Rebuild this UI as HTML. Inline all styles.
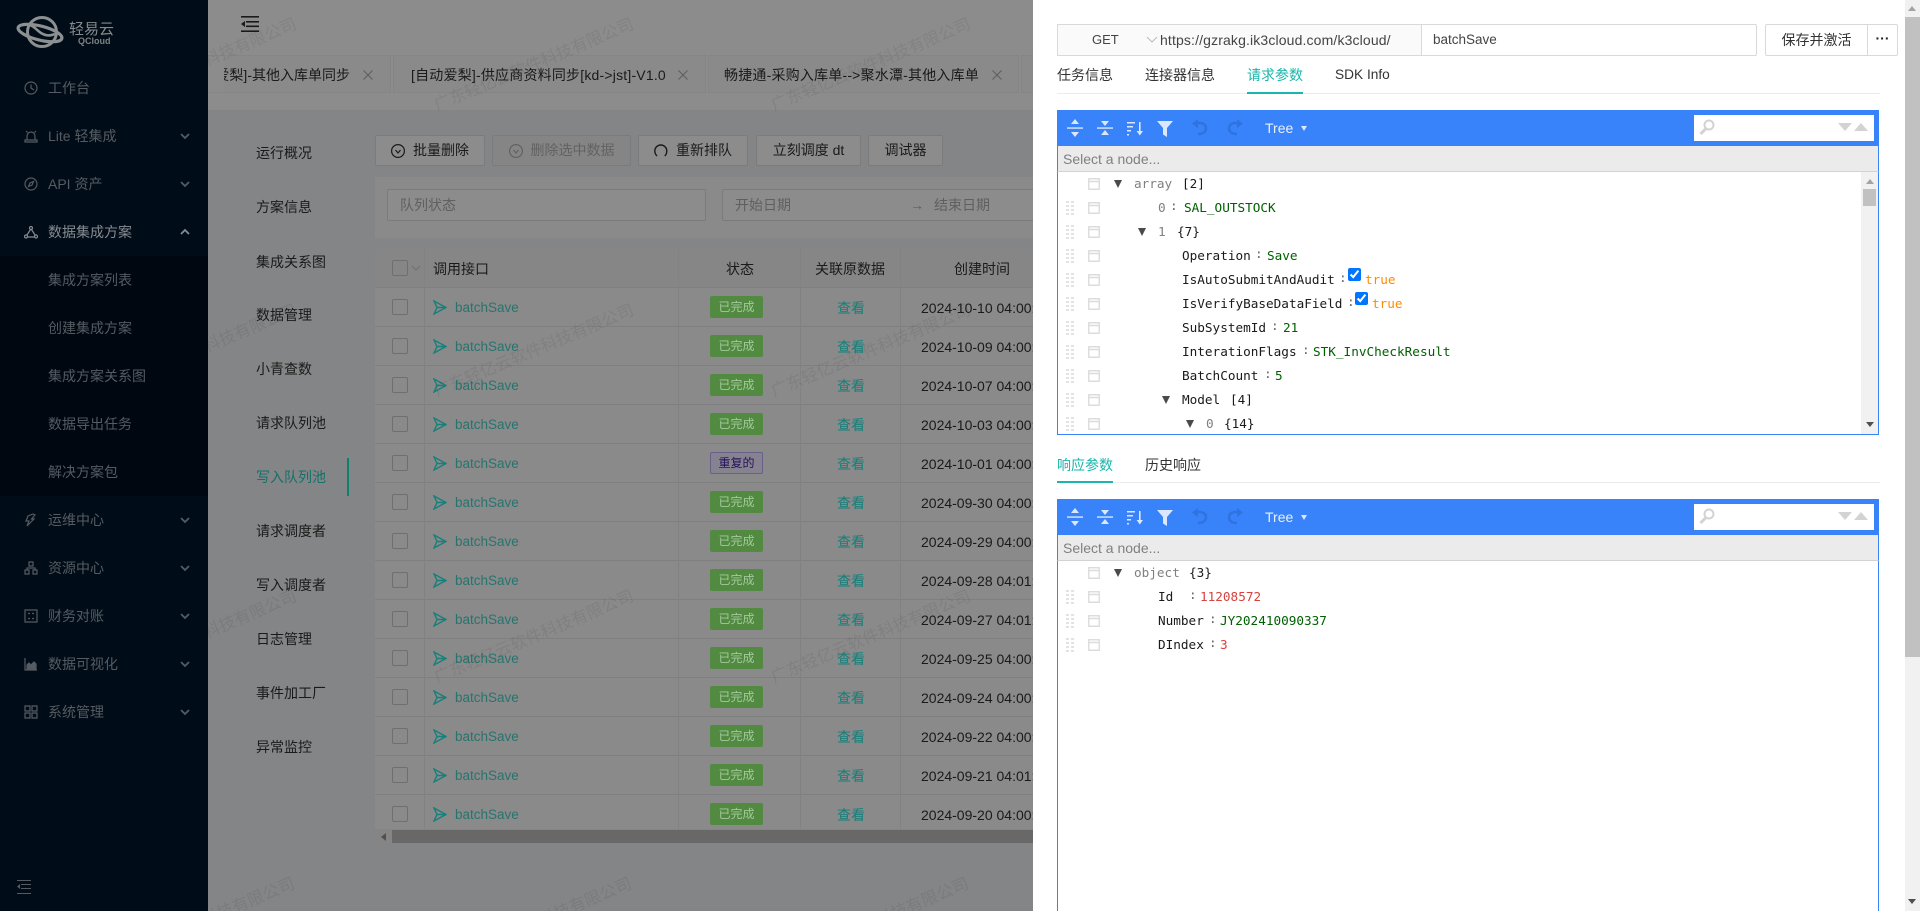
<!DOCTYPE html>
<html lang="zh"><head><meta charset="utf-8"><title>轻易云</title>
<style>
html,body{margin:0;padding:0;width:1920px;height:911px;overflow:hidden;background:#848586}
*{box-sizing:border-box}
body{font:14px/22px "Liberation Sans","Noto Sans CJK SC",sans-serif;color:#1a1a1a}
#root{position:absolute;left:0;top:0;width:1920px;height:911px;overflow:hidden;background:#848586}
/* sidebar */
#side{position:absolute;left:0;top:0;width:208px;height:911px;background:#000c18;overflow:hidden}
#side .sub{position:absolute;left:0;top:256px;width:208px;height:240px;background:#000710}
.m{position:absolute;left:48px;color:#555b61;height:24px;line-height:24px;white-space:nowrap}
.ic{position:absolute;left:24px;width:14px;height:14px;fill:none;stroke:#555b61;stroke-width:1.2}
.ch{position:absolute;left:180px;width:10px;height:6px;fill:none;stroke:#555b61;stroke-width:1.8}
/* top */
#top{position:absolute;left:208px;top:0;width:825px;height:110px;background:#8c8c8c}
.tab{position:absolute;top:55px;height:38px;line-height:38px;background:#8a8a8a;border:1px solid #858585;white-space:nowrap;overflow:hidden;letter-spacing:.2px}
.x{position:absolute;top:14px;width:10px;height:10px;fill:none;stroke:#5d5d5d;stroke-width:1}
/* inner menu */
.l{position:absolute;left:256px;height:22px;white-space:nowrap}
/* buttons */
.b{position:absolute;top:135px;height:31px;line-height:29px;border:1px solid #7b7b7b;background:#8c8c8c;text-align:center;white-space:nowrap;border-radius:2px}
.b svg{vertical-align:-3px;margin-right:8px}
/* table */
#card{position:absolute;left:375px;top:177px;width:658px;height:61px;background:#8a8a8a}
.inp{position:absolute;top:189px;height:32px;border:1px solid #7b7b7b;background:#8c8c8c;color:#5f5f5f;line-height:30px;padding-left:12px;border-radius:2px;white-space:nowrap}
#tb{position:absolute;left:375px;top:249px;width:658px;height:580px;overflow:hidden;background:#8a8a8a}
.hd{position:absolute;left:0;top:0;width:658px;height:39px;background:#868686;border-bottom:1px solid #7f7f7f}
.hd span{position:absolute;top:9px;white-space:nowrap}
.cl{position:absolute;top:0;width:1px;height:580px;background:#828282}
.row{position:absolute;left:0;width:658px;height:39px;border-bottom:1px solid #7f7f7f}
.row>*{position:absolute}
.cb{left:17px;top:11px;width:16px;height:16px;border:1px solid #6f6f6f;background:#8a8a8a;border-radius:2px}
.sd{left:58px;top:12px;width:14px;height:15px;fill:none;stroke:#17807a;stroke-width:1.4}
.bs{left:80px;top:9px;color:#27746e;font-size:13.5px}
.tg{left:335px;top:8px;width:53px;height:22px;line-height:22px;font-size:12px;text-align:center;background:#528a42;color:#a3c99a;border-radius:2px}
.tg.p{background:#86828f;color:#26125f;border:1px solid #66608a;line-height:20px}
.vw{left:462px;top:9px;width:28px;color:#12807a}
.dt{left:546px;top:9px;white-space:nowrap}
/* watermark */
.wm{position:absolute;width:230px;text-align:center;font-size:16.5px;line-height:20px;color:rgba(0,0,0,.07);transform:translate(-50%,-50%) rotate(-22.7deg);white-space:nowrap}
/* drawer */
#dr{position:absolute;left:1033px;top:0;width:887px;height:911px;background:#fff;color:#333}
.d{position:absolute;white-space:nowrap}
.tb{position:absolute;white-space:nowrap;color:#333}
.tb.on{color:#1ab5ab}
.menu{position:absolute;left:1057px;width:822px;height:36px;background:#3883fa}
.nav{position:absolute;left:1057px;width:822px;height:26px;background:#ebebeb;border-left:1px solid #3883fa;border-right:1px solid #3883fa;border-bottom:1px solid #d3d3d3;color:#808080;font-size:14px;line-height:26px;padding-left:5px}
.tree{position:absolute;left:1057px;width:822px;border:1px solid #3883fa;border-top:0;background:#fff}
.r{position:absolute;left:0;height:24px;width:1px}
.r>*{position:absolute;top:0;white-space:pre;font:12.7px/24px "DejaVu Sans Mono","Liberation Mono",monospace}
.k{color:#1a1a1a}.g{color:#808080}.s{color:#006000}.n{color:#d8423c}.o{color:#ff8c00}.c{color:#666;top:-2px!important}
.tri{width:0;height:0;top:8px!important;border-left:4.5px solid transparent;border-right:4.5px solid transparent;border-top:8px solid #4a4a4a}
svg{overflow:visible}
</style></head><body>
<svg width="0" height="0" style="position:absolute">
<symbol id="dg" viewBox="0 0 8 14"><g fill="#e2e2e2"><rect width="3" height="2"/><rect x="5" width="3" height="2"/><rect y="4" width="3" height="2"/><rect x="5" y="4" width="3" height="2"/><rect y="8" width="3" height="2"/><rect x="5" y="8" width="3" height="2"/><rect y="12" width="3" height="2"/><rect x="5" y="12" width="3" height="2"/></g></symbol>
<symbol id="cm" viewBox="0 0 12 12"><path d="M.75.75h10.5v10.5H.75zM.75 3.500h10.500" fill="none" stroke="#dcdcdc" stroke-width="1.4"/></symbol>
<symbol id="pl" viewBox="0 0 14 15"><path d="M1 1l12 6.500L1 14l3-6.500zM4 7.500h9"/></symbol>
<symbol id="tool" viewBox="0 0 106 24">
<g fill="#dbe7fd"><path d="M0 11.400h16v1.300H0zM8 3l4 5H4zM8 21l-4-5h8z"/><path d="M30 11.400h16v1.300H30zM38 10l-4-5h8zM38 14l4 5h-8z"/><path d="M60 6h8v1.500h-8zM60 10h6v1.500h-6zM60 14h4v1.500h-4zM60 18h2v1.500h-2zM72 6h1.600v9H76l-3.200 4.500L69.600 15H72z"/><path d="M90 5h16l-6 7v9l-4-2.500V12z"/></g>
</symbol>
<symbol id="undo" viewBox="0 0 18 18"><path d="M6 15c5 0 8-2 8-6 0-3-3-5-6-5H5" fill="none" stroke="#2f73e0" stroke-width="2.600"/><path d="M6 0L0 4.500 6 9z" fill="#2f73e0"/></symbol>
<symbol id="redo" viewBox="0 0 18 18"><path d="M12 15c-5 0-8-2-8-6 0-3 3-5 6-5h3" fill="none" stroke="#2f73e0" stroke-width="2.600"/><path d="M12 0l6 4.500L12 9z" fill="#2f73e0"/></symbol>
<symbol id="mag" viewBox="0 0 16 16"><circle cx="10" cy="6" r="4.500" fill="none" stroke="#d3d3d3" stroke-width="2"/><path d="M7 9.500L1.500 15" stroke="#d3d3d3" stroke-width="3"/></symbol>
<symbol id="xx" viewBox="0 0 10 10"><path d="M.5.500l9 9M9.500.500l-9 9"/></symbol>
</svg>
<div id="root">

<!-- main background pieces -->
<div id="top">
<svg style="position:absolute;left:33px;top:16px" width="18" height="16"><g fill="#1a1a1a"><rect width="18" height="1.600"/><rect x="5" y="5" width="13" height="1.600"/><rect x="5" y="9.500" width="13" height="1.600"/><rect y="14.400" width="18" height="1.600"/><path d="M0 8l4-3v6z"/></g></svg>
</div>
<div class="tab" style="left:208px;width:183px;border-left:0"><span style="position:absolute;right:40px;white-space:nowrap;letter-spacing:0">[自动爱梨]-其他入库单同步</span><svg class="x" style="left:155px"><use href="#xx"/></svg></div>
<div style="position:absolute;left:208px;top:56px;width:16px;height:36px;background:#8c8c8c"></div>
<div class="tab" style="left:393px;width:313px"><span style="position:absolute;left:17px;white-space:nowrap">[自动爱梨]-供应商资料同步[kd-&gt;jst]-V1.0</span><svg class="x" style="left:284px"><use href="#xx"/></svg></div>
<div class="tab" style="left:708px;width:311px"><span style="position:absolute;left:15px;white-space:nowrap">畅捷通-采购入库单--&gt;聚水潭-其他入库单</span><svg class="x" style="left:283px"><use href="#xx"/></svg></div>
<div class="tab" style="left:1021px;width:12px;border-right:0"></div>

<!-- inner menu -->
<div class="l" style="top:142px">运行概况</div>
<div class="l" style="top:196px">方案信息</div>
<div class="l" style="top:251px">集成关系图</div>
<div class="l" style="top:304px">数据管理</div>
<div class="l" style="top:358px">小青查数</div>
<div class="l" style="top:412px">请求队列池</div>
<div class="l" style="top:466px;color:#14706a">写入队列池</div>
<div style="position:absolute;left:347px;top:458px;width:2px;height:38px;background:#0e8070"></div>
<div class="l" style="top:520px">请求调度者</div>
<div class="l" style="top:574px">写入调度者</div>
<div class="l" style="top:628px">日志管理</div>
<div class="l" style="top:682px">事件加工厂</div>
<div class="l" style="top:736px">异常监控</div>

<!-- buttons -->
<div class="b" style="left:375px;width:110px"><svg width="14" height="14" fill="none" stroke="#1a1a1a" stroke-width="1.2"><circle cx="7" cy="7" r="6.400"/><path d="M4.500 6l2.500 3 2.500-3"/></svg>批量删除</div>
<div class="b" style="left:492px;width:139px;color:#626262;background:#858585"><svg width="14" height="14" fill="none" stroke="#626262" stroke-width="1.2"><circle cx="7" cy="7" r="6.400"/><path d="M4.500 6l2.500 3 2.500-3"/></svg>删除选中数据</div>
<div class="b" style="left:638px;width:110px"><svg width="14" height="14" fill="none" stroke="#1a1a1a" stroke-width="1.400"><path d="M3 12C1 10 .8 8 .8 7a6 6 0 0 1 12 0c0 2-1 4-2 5"/></svg>重新排队</div>
<div class="b" style="left:756px;width:105px">立刻调度 dt</div>
<div class="b" style="left:868px;width:75px">调试器</div>

<div id="card"></div>
<div class="inp" style="left:387px;width:319px">队列状态</div>
<div class="inp" style="left:722px;width:311px;border-right:0;border-radius:2px 0 0 2px">开始日期<span style="position:absolute;left:187px;top:0">→</span><span style="position:absolute;left:211px;top:0">结束日期</span></div>

<!-- table -->
<div id="tb">
<div class="row" style="top:39px"><i class="cb"></i><svg class="sd"><use href="#pl"/></svg><span class="bs">batchSave</span><span class="tg">已完成</span><span class="vw">查看</span><span class="dt">2024-10-10 04:00:13</span></div>
<div class="row" style="top:78px"><i class="cb"></i><svg class="sd"><use href="#pl"/></svg><span class="bs">batchSave</span><span class="tg">已完成</span><span class="vw">查看</span><span class="dt">2024-10-09 04:00:13</span></div>
<div class="row" style="top:117px"><i class="cb"></i><svg class="sd"><use href="#pl"/></svg><span class="bs">batchSave</span><span class="tg">已完成</span><span class="vw">查看</span><span class="dt">2024-10-07 04:00:13</span></div>
<div class="row" style="top:156px"><i class="cb"></i><svg class="sd"><use href="#pl"/></svg><span class="bs">batchSave</span><span class="tg">已完成</span><span class="vw">查看</span><span class="dt">2024-10-03 04:00:13</span></div>
<div class="row" style="top:195px"><i class="cb"></i><svg class="sd"><use href="#pl"/></svg><span class="bs">batchSave</span><span class="tg p">重复的</span><span class="vw">查看</span><span class="dt">2024-10-01 04:00:13</span></div>
<div class="row" style="top:234px"><i class="cb"></i><svg class="sd"><use href="#pl"/></svg><span class="bs">batchSave</span><span class="tg">已完成</span><span class="vw">查看</span><span class="dt">2024-09-30 04:00:13</span></div>
<div class="row" style="top:273px"><i class="cb"></i><svg class="sd"><use href="#pl"/></svg><span class="bs">batchSave</span><span class="tg">已完成</span><span class="vw">查看</span><span class="dt">2024-09-29 04:00:13</span></div>
<div class="row" style="top:312px"><i class="cb"></i><svg class="sd"><use href="#pl"/></svg><span class="bs">batchSave</span><span class="tg">已完成</span><span class="vw">查看</span><span class="dt">2024-09-28 04:01:13</span></div>
<div class="row" style="top:351px"><i class="cb"></i><svg class="sd"><use href="#pl"/></svg><span class="bs">batchSave</span><span class="tg">已完成</span><span class="vw">查看</span><span class="dt">2024-09-27 04:01:13</span></div>
<div class="row" style="top:390px"><i class="cb"></i><svg class="sd"><use href="#pl"/></svg><span class="bs">batchSave</span><span class="tg">已完成</span><span class="vw">查看</span><span class="dt">2024-09-25 04:00:13</span></div>
<div class="row" style="top:429px"><i class="cb"></i><svg class="sd"><use href="#pl"/></svg><span class="bs">batchSave</span><span class="tg">已完成</span><span class="vw">查看</span><span class="dt">2024-09-24 04:00:13</span></div>
<div class="row" style="top:468px"><i class="cb"></i><svg class="sd"><use href="#pl"/></svg><span class="bs">batchSave</span><span class="tg">已完成</span><span class="vw">查看</span><span class="dt">2024-09-22 04:00:13</span></div>
<div class="row" style="top:507px"><i class="cb"></i><svg class="sd"><use href="#pl"/></svg><span class="bs">batchSave</span><span class="tg">已完成</span><span class="vw">查看</span><span class="dt">2024-09-21 04:01:13</span></div>
<div class="row" style="top:541px;height:39px;border-bottom:0"><i class="cb" style="top:16px"></i><svg class="sd" style="top:17px"><use href="#pl"/></svg><span class="bs" style="top:14px">batchSave</span><span class="tg" style="top:13px">已完成</span><span class="vw" style="top:14px">查看</span><span class="dt" style="top:14px">2024-09-20 04:00:13</span></div>
<div class="hd"><i style="position:absolute;left:17px;top:11px;width:16px;height:16px;border:1px solid #6f6f6f;border-radius:2px"></i><svg style="position:absolute;left:37px;top:17px" width="8" height="5" fill="none" stroke="#6f6f6f"><path d="M0 0l4 4 4-4"/></svg><span style="left:58px">调用接口</span><span style="left:351px;width:28px;text-align:center">状态</span><span style="left:440px">关联原数据</span><span style="left:579px">创建时间</span></div>
<i class="cl" style="left:49px"></i><i class="cl" style="left:303px"></i><i class="cl" style="left:425px"></i><i class="cl" style="left:525px"></i>
</div>
<div style="position:absolute;left:375px;top:829px;width:658px;height:14px;background:#858585"></div>
<div style="position:absolute;left:392px;top:830px;width:641px;height:13px;background:#686868"></div>
<div style="position:absolute;left:381px;top:833px;width:0;height:0;border-top:4px solid transparent;border-bottom:4px solid transparent;border-right:5px solid #505050"></div>

<!-- watermark -->
<div class="wm" style="left:197px;top:65px">广东轻亿云软件科技有限公司</div>
<div class="wm" style="left:534px;top:65px">广东轻亿云软件科技有限公司</div>
<div class="wm" style="left:871px;top:65px">广东轻亿云软件科技有限公司</div>
<div class="wm" style="left:197px;top:351px">广东轻亿云软件科技有限公司</div>
<div class="wm" style="left:534px;top:351px">广东轻亿云软件科技有限公司</div>
<div class="wm" style="left:871px;top:351px">广东轻亿云软件科技有限公司</div>
<div class="wm" style="left:197px;top:637px">广东轻亿云软件科技有限公司</div>
<div class="wm" style="left:534px;top:637px">广东轻亿云软件科技有限公司</div>
<div class="wm" style="left:871px;top:637px">广东轻亿云软件科技有限公司</div>
<svg style="position:absolute;left:208px;top:860px;overflow:hidden" width="825" height="51" font-size="16.500" fill="#000" fill-opacity=".07" text-anchor="middle" font-family="Liberation Sans, Noto Sans CJK SC, sans-serif"><text transform="translate(-11 69) rotate(-22.700)">广东轻亿云软件科技有限公司</text><text transform="translate(326 69) rotate(-22.700)">广东轻亿云软件科技有限公司</text><text transform="translate(663 69) rotate(-22.700)">广东轻亿云软件科技有限公司</text></svg>

<!-- sidebar -->
<div id="side">
<div class="sub"></div>
<svg style="position:absolute;left:0;top:0" width="70" height="56" fill="none" stroke="#8c9090" stroke-width="3"><circle cx="42" cy="32" r="14.500"/><ellipse cx="40" cy="33" rx="22.500" ry="7" transform="rotate(14 40 33)" stroke-width="3.200"/><path d="M28 25c6 0 8 5 13 8s9 3 14 1" stroke-width="2.600"/></svg>
<div style="position:absolute;left:69px;top:21px;font-size:15px;line-height:18px;color:#868a8a;white-space:nowrap">轻易云</div>
<div style="position:absolute;left:78px;top:36px;font-size:9px;line-height:11px;font-weight:bold;color:#7d8282;white-space:nowrap">QCloud</div>

<svg class="ic" style="top:81px"><circle cx="7" cy="7" r="6"/><path d="M7 3.500V7l3 2"/></svg><div class="m" style="top:76px">工作台</div>
<svg class="ic" style="top:129px"><path d="M3 11V7a4 4 0 0 1 8 0v4M1 13h12v-2H1zM2 2l1.500 1.500M12 2l-1.500 1.500"/></svg><div class="m" style="top:124px">Lite 轻集成</div><svg class="ch" style="top:133px"><path d="M1 1l4 4 4-4"/></svg>
<svg class="ic" style="top:177px"><circle cx="7" cy="7" r="6"/><path d="M9.500 4.500L8 8 4.500 9.500 6 6z"/></svg><div class="m" style="top:172px">API 资产</div><svg class="ch" style="top:181px"><path d="M1 1l4 4 4-4"/></svg>
<svg class="ic" style="top:225px;stroke:#868b90"><circle cx="7" cy="3" r="1.500"/><circle cx="2" cy="11.500" r="1.500"/><circle cx="12" cy="11.500" r="1.500"/><path d="M6.500 4.500L3 10M7.500 4.500L11 10M3.500 12h7"/></svg><div class="m" style="top:220px;color:#868b90">数据集成方案</div><svg class="ch" style="top:229px;stroke:#868b90"><path d="M1 5l4-4 4 4"/></svg>
<div class="m" style="top:268px">集成方案列表</div>
<div class="m" style="top:316px">创建集成方案</div>
<div class="m" style="top:364px">集成方案关系图</div>
<div class="m" style="top:412px">数据导出任务</div>
<div class="m" style="top:460px">解决方案包</div>
<svg class="ic" style="top:513px"><path d="M9 1L4 3 2 8h3l-2 5 7-7H7.500L11 2z"/></svg><div class="m" style="top:508px">运维中心</div><svg class="ch" style="top:517px"><path d="M1 1l4 4 4-4"/></svg>
<svg class="ic" style="top:561px"><path d="M5 1h4v4H5zM1 9h4v4H1zM9 9h4v4H9zM3 9V7h8v2"/></svg><div class="m" style="top:556px">资源中心</div><svg class="ch" style="top:565px"><path d="M1 1l4 4 4-4"/></svg>
<svg class="ic" style="top:609px"><path d="M1 1h12v12H1zM4 4.500h2M8 4.500h2M4 9.500h2M8 9.500h2"/></svg><div class="m" style="top:604px">财务对账</div><svg class="ch" style="top:613px"><path d="M1 1l4 4 4-4"/></svg>
<svg class="ic" style="top:657px"><path d="M1 1v12h12" /><path d="M3 12V8l2-2 2 2 3-3 2 2v5z" fill="#555b61"/></svg><div class="m" style="top:652px">数据可视化</div><svg class="ch" style="top:661px"><path d="M1 1l4 4 4-4"/></svg>
<svg class="ic" style="top:705px"><path d="M1 1h5v5H1zM8 1h5v5H8zM1 8h5v5H1zM8 8h5v5H8z"/></svg><div class="m" style="top:700px">系统管理</div><svg class="ch" style="top:709px"><path d="M1 1l4 4 4-4"/></svg>
<svg style="position:absolute;left:17px;top:880px" width="14" height="14"><g fill="#555b61"><rect width="14" height="1"/><rect x="4" y="4" width="10" height="1"/><rect x="4" y="8" width="10" height="1"/><rect y="13" width="14" height="1"/><path d="M0 6.500l3-2.500v5z"/></g></svg>
</div>

<!-- drawer -->
<div id="dr"></div>
<div class="d" style="left:1057px;top:24px;width:365px;height:32px;background:#fafafa;border:1px solid #d9d9d9"></div>
<div class="d" style="left:1092px;top:28px;line-height:24px;color:#444;font-size:13px">GET</div>
<svg style="position:absolute;left:1147px;top:37px" width="10" height="6" fill="none" stroke="#bbb"><path d="M0 0l5 5 5-5"/></svg>
<div class="d" style="left:1160px;top:28px;line-height:24px;color:#444;font-size:14px;letter-spacing:.14px">https://gzrakg.ik3cloud.com/k3cloud/</div>
<div class="d" style="left:1421px;top:24px;width:336px;height:32px;border:1px solid #d9d9d9;border-radius:0 2px 2px 0;line-height:30px;padding-left:11px;color:#444;font-size:13.5px">batchSave</div>
<div class="d" style="left:1765px;top:24px;width:103px;height:32px;border:1px solid #d9d9d9;border-radius:2px 0 0 2px;text-align:center;line-height:30px;color:#333">保存并激活</div>
<div class="d" style="left:1867px;top:24px;width:31px;height:32px;border:1px solid #d9d9d9;border-radius:0 2px 2px 0;text-align:center;line-height:26px;color:#222;font-weight:bold">···</div>

<div style="position:absolute;left:1057px;top:93px;width:823px;height:1px;background:#ececec"></div>
<div class="tb" style="left:1057px;top:64px">任务信息</div>
<div class="tb" style="left:1145px;top:64px">连接器信息</div>
<div class="tb on" style="left:1247px;top:64px">请求参数</div>
<div style="position:absolute;left:1247px;top:92px;width:56px;height:2px;background:#1ab5ab"></div>
<div class="tb" style="left:1335px;top:64px;font-size:13.7px">SDK Info</div>

<div class="menu" style="top:110px"></div>
<svg style="position:absolute;left:1067px;top:116px" width="106" height="24"><use href="#tool"/></svg>
<svg style="position:absolute;left:1192px;top:119px" width="18" height="18"><use href="#undo"/></svg>
<svg style="position:absolute;left:1225px;top:119px" width="18" height="18"><use href="#redo"/></svg>
<div class="d" style="left:1265px;top:117px;color:#e8f0fe;line-height:22px">Tree</div>
<div style="position:absolute;left:1301px;top:126px;border-left:3px solid transparent;border-right:3px solid transparent;border-top:5px solid #dbe7fd"></div>
<div style="position:absolute;left:1694px;top:115px;width:180px;height:26px;background:#fff"></div>
<svg style="position:absolute;left:1699px;top:119px" width="16" height="16"><use href="#mag"/></svg>
<div style="position:absolute;left:1838px;top:123px;border-left:7px solid transparent;border-right:7px solid transparent;border-top:8px solid #d3d3d3"></div>
<div style="position:absolute;left:1854px;top:123px;border-left:7px solid transparent;border-right:7px solid transparent;border-bottom:8px solid #d3d3d3"></div>
<div class="nav" style="top:146px">Select a node...</div>
<div class="tree" style="top:172px;height:263px"></div>
<div style="position:absolute;left:1861px;top:172px;width:17px;height:262px;background:#f1f1f1"></div>
<div style="position:absolute;left:1866px;top:179px;border-left:4px solid transparent;border-right:4px solid transparent;border-bottom:5px solid #a3a3a3"></div>
<div style="position:absolute;left:1863px;top:189px;width:13px;height:17px;background:#c1c1c1"></div>
<div style="position:absolute;left:1866px;top:422px;border-left:4px solid transparent;border-right:4px solid transparent;border-top:5px solid #505050"></div>

<div class="r" style="top:172px"><svg style="left:1088px;margin-top:6px" width="12" height="12"><use href="#cm"/></svg><i class="tri" style="left:1114px"></i><span class="g" style="left:1134px">array</span><span class="k" style="left:1182px">[2]</span></div>
<div class="r" style="top:196px"><svg style="left:1066px;margin-top:5px" width="8" height="14"><use href="#dg"/></svg><svg style="left:1088px;margin-top:6px" width="12" height="12"><use href="#cm"/></svg><span class="g" style="left:1158px">0</span><span class="c" style="left:1170px">:</span><span class="s" style="left:1184px">SAL_OUTSTOCK</span></div>
<div class="r" style="top:220px"><svg style="left:1066px;margin-top:5px" width="8" height="14"><use href="#dg"/></svg><svg style="left:1088px;margin-top:6px" width="12" height="12"><use href="#cm"/></svg><i class="tri" style="left:1138px"></i><span class="g" style="left:1158px">1</span><span class="k" style="left:1177px">{7}</span></div>
<div class="r" style="top:244px"><svg style="left:1066px;margin-top:5px" width="8" height="14"><use href="#dg"/></svg><svg style="left:1088px;margin-top:6px" width="12" height="12"><use href="#cm"/></svg><span class="k" style="left:1182px">Operation</span><span class="c" style="left:1255px">:</span><span class="s" style="left:1267px">Save</span></div>
<div class="r" style="top:268px"><svg style="left:1066px;margin-top:5px" width="8" height="14"><use href="#dg"/></svg><svg style="left:1088px;margin-top:6px" width="12" height="12"><use href="#cm"/></svg><span class="k" style="left:1182px">IsAutoSubmitAndAudit</span><span class="c" style="left:1339px">:</span><input type="checkbox" checked style="left:1348px;top:0;margin:0;width:13px;height:13px"><span class="o" style="left:1365px">true</span></div>
<div class="r" style="top:292px"><svg style="left:1066px;margin-top:5px" width="8" height="14"><use href="#dg"/></svg><svg style="left:1088px;margin-top:6px" width="12" height="12"><use href="#cm"/></svg><span class="k" style="left:1182px">IsVerifyBaseDataField</span><span class="c" style="left:1347px">:</span><input type="checkbox" checked style="left:1355px;top:0;margin:0;width:13px;height:13px"><span class="o" style="left:1372px">true</span></div>
<div class="r" style="top:316px"><svg style="left:1066px;margin-top:5px" width="8" height="14"><use href="#dg"/></svg><svg style="left:1088px;margin-top:6px" width="12" height="12"><use href="#cm"/></svg><span class="k" style="left:1182px">SubSystemId</span><span class="c" style="left:1271px">:</span><span class="s" style="left:1283px">21</span></div>
<div class="r" style="top:340px"><svg style="left:1066px;margin-top:5px" width="8" height="14"><use href="#dg"/></svg><svg style="left:1088px;margin-top:6px" width="12" height="12"><use href="#cm"/></svg><span class="k" style="left:1182px">InterationFlags</span><span class="c" style="left:1302px">:</span><span class="s" style="left:1313px">STK_InvCheckResult</span></div>
<div class="r" style="top:364px"><svg style="left:1066px;margin-top:5px" width="8" height="14"><use href="#dg"/></svg><svg style="left:1088px;margin-top:6px" width="12" height="12"><use href="#cm"/></svg><span class="k" style="left:1182px">BatchCount</span><span class="c" style="left:1264px">:</span><span class="s" style="left:1275px">5</span></div>
<div class="r" style="top:388px"><svg style="left:1066px;margin-top:5px" width="8" height="14"><use href="#dg"/></svg><svg style="left:1088px;margin-top:6px" width="12" height="12"><use href="#cm"/></svg><i class="tri" style="left:1162px"></i><span class="k" style="left:1182px">Model</span><span class="k" style="left:1230px">[4]</span></div>
<div class="r" style="top:412px"><svg style="left:1066px;margin-top:5px" width="8" height="14"><use href="#dg"/></svg><svg style="left:1088px;margin-top:6px" width="12" height="12"><use href="#cm"/></svg><i class="tri" style="left:1186px"></i><span class="g" style="left:1206px">0</span><span class="k" style="left:1224px">{14}</span></div>

<div style="position:absolute;left:1057px;top:482px;width:823px;height:1px;background:#ececec"></div>
<div class="tb on" style="left:1057px;top:454px">响应参数</div>
<div style="position:absolute;left:1057px;top:481px;width:56px;height:2px;background:#1ab5ab"></div>
<div class="tb" style="left:1145px;top:454px">历史响应</div>

<div class="menu" style="top:499px"></div>
<svg style="position:absolute;left:1067px;top:505px" width="106" height="24"><use href="#tool"/></svg>
<svg style="position:absolute;left:1192px;top:508px" width="18" height="18"><use href="#undo"/></svg>
<svg style="position:absolute;left:1225px;top:508px" width="18" height="18"><use href="#redo"/></svg>
<div class="d" style="left:1265px;top:506px;color:#e8f0fe;line-height:22px">Tree</div>
<div style="position:absolute;left:1301px;top:515px;border-left:3px solid transparent;border-right:3px solid transparent;border-top:5px solid #dbe7fd"></div>
<div style="position:absolute;left:1694px;top:504px;width:180px;height:26px;background:#fff"></div>
<svg style="position:absolute;left:1699px;top:508px" width="16" height="16"><use href="#mag"/></svg>
<div style="position:absolute;left:1838px;top:512px;border-left:7px solid transparent;border-right:7px solid transparent;border-top:8px solid #d3d3d3"></div>
<div style="position:absolute;left:1854px;top:512px;border-left:7px solid transparent;border-right:7px solid transparent;border-bottom:8px solid #d3d3d3"></div>
<div class="nav" style="top:535px">Select a node...</div>
<div class="tree" style="top:561px;height:350px;border-bottom:0"></div>

<div class="r" style="top:561px"><svg style="left:1088px;margin-top:6px" width="12" height="12"><use href="#cm"/></svg><i class="tri" style="left:1114px"></i><span class="g" style="left:1134px">object</span><span class="k" style="left:1189px">{3}</span></div>
<div class="r" style="top:585px"><svg style="left:1066px;margin-top:5px" width="8" height="14"><use href="#dg"/></svg><svg style="left:1088px;margin-top:6px" width="12" height="12"><use href="#cm"/></svg><span class="k" style="left:1158px">Id</span><span class="c" style="left:1189px">:</span><span class="n" style="left:1200px">11208572</span></div>
<div class="r" style="top:609px"><svg style="left:1066px;margin-top:5px" width="8" height="14"><use href="#dg"/></svg><svg style="left:1088px;margin-top:6px" width="12" height="12"><use href="#cm"/></svg><span class="k" style="left:1158px">Number</span><span class="c" style="left:1209px">:</span><span class="s" style="left:1220px">JY202410090337</span></div>
<div class="r" style="top:633px"><svg style="left:1066px;margin-top:5px" width="8" height="14"><use href="#dg"/></svg><svg style="left:1088px;margin-top:6px" width="12" height="12"><use href="#cm"/></svg><span class="k" style="left:1158px">DIndex</span><span class="c" style="left:1209px">:</span><span class="n" style="left:1220px">3</span></div>

<!-- page scrollbar -->
<div style="position:absolute;left:1905px;top:0;width:15px;height:911px;background:#f1f1f1"></div>
<div style="position:absolute;left:1908px;top:6px;border-left:4px solid transparent;border-right:4px solid transparent;border-bottom:5px solid #a3a3a3"></div>
<div style="position:absolute;left:1905px;top:17px;width:15px;height:640px;background:#c1c1c1"></div>
<div style="position:absolute;left:1908px;top:899px;border-left:4px solid transparent;border-right:4px solid transparent;border-top:5px solid #505050"></div>
</div>
</body></html>
